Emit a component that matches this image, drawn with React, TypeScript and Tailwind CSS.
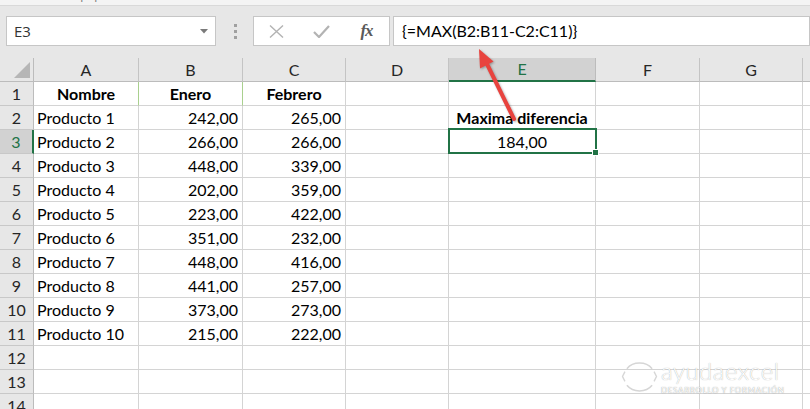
import React from "react";

const data: [string, string, string][] = [
  ["Producto 1", "242,00", "265,00"],
  ["Producto 2", "266,00", "266,00"],
  ["Producto 3", "448,00", "339,00"],
  ["Producto 4", "202,00", "359,00"],
  ["Producto 5", "223,00", "422,00"],
  ["Producto 6", "351,00", "232,00"],
  ["Producto 7", "448,00", "416,00"],
  ["Producto 8", "441,00", "257,00"],
  ["Producto 9", "373,00", "273,00"],
  ["Producto 10", "215,00", "222,00"],
];

const letters = ["A", "B", "C", "D", "E", "F", "G", ""];

const cellBase =
  "relative border-r border-b border-[#d4d4d4] bg-white text-[16px] leading-[23px] text-black whitespace-nowrap";

function BodyCell({ r, c }: { r: number; c: number }) {
  if (r === 1 && c <= 2) {
    const label = ["Nombre", "Enero", "Febrero"][c];
    const border = c < 2 ? "border-r-[#a9d08e]" : "";
    return (
      <div className={`${cellBase} ${border} bg-[#a9d08e] font-bold text-[16.5px] text-center`}>
        {label}
      </div>
    );
  }
  if (r >= 2 && r <= 11 && c <= 2) {
    const row = data[r - 2];
    if (c === 0) return <div className={`${cellBase} pl-[3px]`}>{row[0]}</div>;
    return <div className={`${cellBase} text-right pr-[4px]`}>{row[c]}</div>;
  }
  if (r === 2 && c === 4) {
    return (
      <div className={`${cellBase} bg-[#a9d08e] font-bold text-[16.5px] text-center`}>Maxima diferencia</div>
    );
  }
  if (r === 3 && c === 4) {
    return (
      <div className={`${cellBase} text-center`}>
        184,00
        <div className="absolute z-10 top-[-2px] left-[-1px] right-[-2px] bottom-[-1px] border-2 border-[#217346] pointer-events-none" />
        <div className="absolute z-20 right-[-4px] bottom-[-3px] w-[7px] h-[7px] bg-[#217346] border border-white" />
      </div>
    );
  }
  return <div className={cellBase} />;
}

export default function App() {
  const rows = Array.from({ length: 14 }, (_, i) => i + 1);
  return (
    <div className="relative w-[810px] h-[409px] overflow-hidden bg-white font-['Lato',sans-serif]">
      {/* ribbon remnant */}
      <div className="relative h-[6px] bg-[#f4f4f4] border-b border-[#d9d9d9] overflow-hidden">
        <span className="absolute left-[50px] top-[-13px] text-[12px] leading-[16px] text-[#777] font-['Open_Sans',sans-serif]">
          Portapapeles
        </span>
      </div>
      {/* formula bar */}
      <div className="h-[52px] bg-[#e7e7e7] pt-[10px] flex items-start">
        <div className="ml-[6px] w-[210px] h-[30px] border border-[#c6c6c6] bg-white flex items-center justify-between pl-[7px] pr-[7px]">
          <span className="text-[15px] leading-[28px] text-[#333] font-['Open_Sans',sans-serif]">E3</span>
          <svg width="8" height="5" viewBox="0 0 8 5">
            <polygon points="0,0 8,0 4,4.5" fill="#7a7a7a" />
          </svg>
        </div>
        <div className="ml-[18px] mt-[8px] w-[3px] flex flex-col gap-[3px]">
          <div className="w-[3px] h-[3px] bg-[#a0a0a0]" />
          <div className="w-[3px] h-[3px] bg-[#a0a0a0]" />
          <div className="w-[3px] h-[3px] bg-[#a0a0a0]" />
        </div>
        <div className="ml-[16px] w-[137px] h-[30px] border border-[#c6c6c6] bg-white flex items-center">
          <div className="w-[45px] flex justify-center">
            <svg width="15" height="13" viewBox="0 0 15 13">
              <path d="M1 0.5 L14 12.5 M14 0.5 L1 12.5" stroke="#b3b3b3" strokeWidth="1.4" />
            </svg>
          </div>
          <div className="w-[45px] flex justify-center">
            <svg width="17" height="13" viewBox="0 0 17 13">
              <path d="M1 7 L6 12 L16 1" stroke="#b3b3b3" strokeWidth="2.2" fill="none" />
            </svg>
          </div>
          <div className="w-[45px] flex justify-center">
            <span className="italic font-bold text-[17px] leading-[20px] text-[#5a5a5a] font-['Liberation_Serif',serif] tracking-[-1px]">
              fx
            </span>
          </div>
        </div>
        <div className="ml-[3px] flex-1 h-[30px] border border-[#c6c6c6] bg-white pl-[8px]">
          <span className="text-[16px] leading-[28px] text-black">{"{=MAX(B2:B11-C2:C11)}"}</span>
        </div>
      </div>
      {/* grid */}
      <div className="grid grid-cols-[34px_105px_104px_103px_103px_147px_104px_103px_20px] auto-rows-[24px]">
        <div className="relative bg-[#e7e7e7] border-r border-b border-[#bcbcbc] flex items-end justify-end pr-[3px] pb-[3px]">
          <svg width="16" height="16" viewBox="0 0 16 16">
            <polygon points="16,0 16,16 0,16" fill="#b6b6b6" />
          </svg>
        </div>
        {letters.map((l, i) =>
          i === 4 ? (
            <div
              key={l + i}
              className="bg-[#d2d2d2] border-r border-[#bcbcbc] border-b-2 border-b-[#217346] text-center text-[16px] leading-[22px] text-[#217346]"
            >
              {l}
            </div>
          ) : (
            <div
              key={l + i}
              className="bg-[#e7e7e7] border-r border-b border-[#c4c4c4] border-b-[#bcbcbc] text-center text-[16px] leading-[23px] text-[#262626]"
            >
              {l}
            </div>
          )
        )}
        {rows.map((r) => (
          <React.Fragment key={r}>
            {r === 3 ? (
              <div className="bg-[#d2d2d2] border-r-2 border-r-[#217346] border-b border-b-[#c8c8c8] text-center text-[16px] leading-[23px] text-[#217346]">
                {r}
              </div>
            ) : (
              <div className="bg-[#e7e7e7] border-r border-b border-[#c8c8c8] border-r-[#bcbcbc] text-center text-[16px] leading-[23px] text-[#262626]">
                {r}
              </div>
            )}
            {Array.from({ length: 8 }, (_, c) => (
              <BodyCell key={c} r={r} c={c} />
            ))}
          </React.Fragment>
        ))}
      </div>

      {/* watermark */}
      <div className="absolute left-[621px] top-[360px] flex items-start gap-[3px] pointer-events-none">
        <svg width="37" height="33" viewBox="0 0 38 34">
          <path d="M6 9 A16 14 0 0 1 32 9" stroke="#d6d6d6" strokeWidth="1.6" fill="none" />
          <path d="M6 26 A16 14 0 0 0 32 26" stroke="#d6d6d6" strokeWidth="1.6" fill="none" />
          <path d="M4 12 L1.5 17 L4 22" stroke="#d6d6d6" strokeWidth="1.4" fill="none" />
          <path d="M34 12 L36.5 17 L34 22" stroke="#d6d6d6" strokeWidth="1.4" fill="none" />
        </svg>
        <div className="flex flex-col items-start">
          <span className="text-[24px] leading-[22px] font-light text-white tracking-[0.5px] [text-shadow:0_0_1px_rgba(0,0,0,0.4)]">
            ayudaexcel
          </span>
          <span className="mt-[4px] text-[8px] leading-[9px] text-white tracking-[0.7px] [text-shadow:0_0_1px_rgba(0,0,0,0.5)]">
            DESARROLLO Y FORMACIÓN
          </span>
        </div>
      </div>

      {/* red arrow */}
      <svg
        className="absolute left-0 top-0 pointer-events-none [filter:drop-shadow(1px_1px_1px_rgba(0,0,0,0.3))]"
        width="810"
        height="409"
        viewBox="0 0 810 409"
      >
        <line x1="514" y1="119" x2="486" y2="62" stroke="#e8433e" strokeWidth="4" strokeLinecap="round" />
        <polygon points="479,49 493.5,61.5 480,68.5" fill="#e8433e" />
      </svg>
    </div>
  );
}
